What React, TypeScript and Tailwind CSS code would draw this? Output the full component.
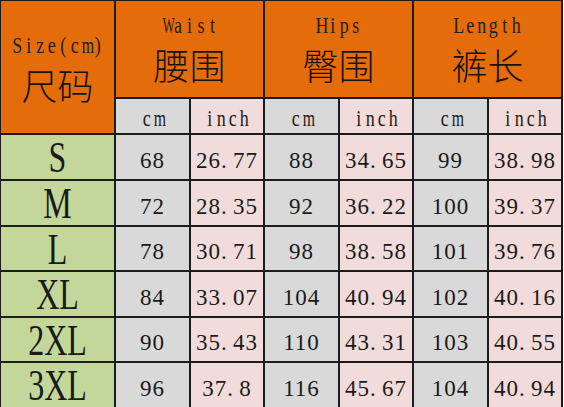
import React from "react";

const rows = [
  ["S", "68", "26.77", "88", "34.65", "99", "38.98"],
  ["M", "72", "28.35", "92", "36.22", "100", "39.37"],
  ["L", "78", "30.71", "98", "38.58", "101", "39.76"],
  ["XL", "84", "33.07", "104", "40.94", "102", "40.16"],
  ["2XL", "90", "35.43", "110", "43.31", "103", "40.55"],
  ["3XL", "96", "37.8", "116", "45.67", "104", "40.94"],
];

function Num({ v }: { v: string }) {
  const [a, b] = v.split(".");
  return (
    <span className="inline-block whitespace-nowrap pt-[6px] text-[23px] leading-none tracking-[1px] text-[#1a1a1a] [font-family:'Liberation_Serif',serif]">
      {a}
      {b !== undefined && (
        <>
          <span className="inline-block w-[12px] text-left">.</span>
          {b}
        </>
      )}
    </span>
  );
}

function Mono({ text }: { text: string }) {
  return (
    <span className="inline-flex scale-y-[1.3] text-[18px] leading-none text-[#262014] [font-family:'Liberation_Serif',serif]">
      {text.split("").map((c, i) => (
        <span
          key={i}
          className={`inline-block w-[11.5px] text-center ${c === "W" ? "scale-x-[0.72]" : c === "m" ? "scale-x-[0.88]" : ""}`}
        >
          {c}
        </span>
      ))}
    </span>
  );
}

function Cjk({ children }: { children: React.ReactNode }) {
  return (
    <span className="block text-[36px] font-light leading-none text-[#1a1208] [font-family:'Noto_Sans_CJK_SC',sans-serif]">
      {children}
    </span>
  );
}

export default function App() {
  const orange = "bg-[#e46c0a]";
  return (
    <div className="h-[407px] w-[564px] overflow-hidden bg-white">
      <div className="grid w-[563px] grid-cols-[113px_73px_72px_73px_72px_73px_72px] grid-rows-[96px_34px_44px_44px_43px_44px_43px_44px] gap-[2px] bg-[#1c1c1c] p-[1px] pr-[2px]">
        <div className={`${orange} row-span-2 flex flex-col items-center justify-center gap-[12px] pt-[4px]`}>
          <Mono text="Size(cm)" />
          <Cjk>尺码</Cjk>
        </div>
        {[
          ["Waist", "腰围"],
          ["Hips", "臀围"],
          ["Length", "裤长"],
        ].map(([en, zh]) => (
          <div key={en} className={`${orange} col-span-2 flex flex-col items-center justify-center gap-[12px]`}>
            <Mono text={en} />
            <Cjk>{zh}</Cjk>
          </div>
        ))}
        {[0, 1, 2].map((i) => (
          <React.Fragment key={i}>
            <div className="flex items-center justify-center bg-[#d9d9d9] pt-[4px]">
              <Mono text="cm" />
            </div>
            <div className="flex items-center justify-center bg-[#f2dcdb] pt-[4px]">
              <Mono text="inch" />
            </div>
          </React.Fragment>
        ))}
        {rows.map((r) => (
          <React.Fragment key={r[0]}>
            <div className="flex items-center justify-center bg-[#c4d79b]">
              <span className="inline-block scale-y-[1.38] text-[32px] leading-[24px] text-[#1a1a1a] [font-family:'Liberation_Serif',serif]">
                {r[0]}
              </span>
            </div>
            {r.slice(1).map((v, j) => (
              <div
                key={j}
                className={`flex items-center justify-center ${j % 2 === 0 ? "bg-[#d9d9d9]" : "bg-[#f2dcdb]"}`}
              >
                <Num v={v} />
              </div>
            ))}
          </React.Fragment>
        ))}
      </div>
    </div>
  );
}
